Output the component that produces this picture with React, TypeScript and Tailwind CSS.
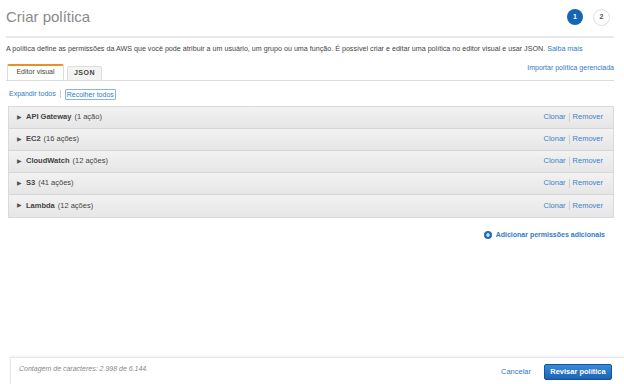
import React from 'react';

const services = [
  { name: 'API Gateway', count: '(1 ação)' },
  { name: 'EC2', count: '(16 ações)' },
  { name: 'CloudWatch', count: '(12 ações)' },
  { name: 'S3', count: '(41 ações)' },
  { name: 'Lambda', count: '(12 ações)' },
];

function ServiceRow({ name, count }: { name: string; count: string }) {
  return (
    <div className="flex h-[22px] items-center justify-between border-b border-[#d6d6d6] bg-gradient-to-b from-[#f2f2f2] to-[#e6e6e6] pl-[8px] pr-[10px] last:border-b-0">
      <div className="flex items-center text-[7.5px] text-[#444]">
        <span className="mr-[4px] text-[5.5px] text-[#555]">▶</span>
        <span className="font-bold">{name}</span>
        <span className="ml-[3px]">{count}</span>
      </div>
      <div className="flex items-center text-[7.5px] text-[#3b83c9]">
        <span>Clonar</span>
        <span className="mx-[3px] h-[9px] w-px bg-[#cfcfcf]" />
        <span>Remover</span>
      </div>
    </div>
  );
}

export default function App() {
  return (
    <div className="flex h-[384px] w-[624px] flex-col overflow-hidden bg-white font-['Liberation_Sans',Arial,sans-serif]">
      <div className="flex items-center justify-between pl-[6px] pr-[14px] pt-[8px]">
        <h1 className="text-[15px] leading-[18px] text-[#8a8a8a]">Criar política</h1>
        <div className="flex items-center gap-[10px]">
          <div className="flex h-[16px] w-[16px] items-center justify-center rounded-full bg-[#1565b7] text-[7px] font-bold text-white">1</div>
          <div className="flex h-[17px] w-[17px] items-center justify-center rounded-full border border-[#dedede] bg-white text-[7px] font-bold text-[#555]">2</div>
        </div>
      </div>

      <div className="ml-[6px] mr-[10px] mt-[10px] border-t-2 border-[#e8e8e8]" />

      <p className="mt-[7px] px-[6px] text-[7.15px] leading-[9px] text-[#444]">
        A política define as permissões da AWS que você pode atribuir a um usuário, um grupo ou uma função. É possível criar e editar uma política no editor visual e usar JSON. <span className="text-[#2f7cc6]">Saiba mais</span>
      </p>

      <div className="ml-[6px] mr-[10px] mt-[9px] flex items-end justify-between border-b border-[#dcdcdc]">
        <div className="flex items-end gap-[3px] pl-[1px]">
          <div className="flex h-[16px] w-[57px] items-center justify-center rounded-t-[2px] border-x border-t-2 border-[#e8912a] border-x-[#dcdcdc] bg-white text-[7px] text-[#444]">Editor visual</div>
          <div className="mb-[-1px] flex h-[15px] w-[35px] items-center justify-center rounded-t-[2px] border border-[#dcdcdc] bg-[#f4f4f4] text-[7px] font-bold tracking-[0.5px] text-[#444]">JSON</div>
        </div>
        <span className="mb-[6px] text-[7px] text-[#2f7cc6]">Importar política gerenciada</span>
      </div>

      <div className="mt-[8px] flex items-center pl-[9px] text-[7px] text-[#2f7cc6]">
        <span>Expandir todos</span>
        <span className="mx-[4px] h-[8px] w-px bg-[#cfcfcf]" />
        <span className="rounded-[1px] border border-[#8ab4e0] px-[1px] leading-[9px]">Recolher todos</span>
      </div>

      <div className="ml-[8px] mr-[10px] mt-[6px] border border-[#dadada]">
        {services.map((s) => (
          <ServiceRow key={s.name} name={s.name} count={s.count} />
        ))}
      </div>

      <div className="mt-[12px] flex items-center justify-end pr-[19px] text-[7px] font-bold text-[#2f7cc6]">
        <svg width="8" height="8" viewBox="0 0 16 16" className="mr-[4px]">
          <circle cx="8" cy="8" r="8" fill="#1f6fbd" />
          <path d="M8 4v8M4 8h8" stroke="#fff" strokeWidth="2.4" />
        </svg>
        <span>Adicionar permissões adicionais</span>
      </div>

      <div className="ml-[10px] mt-auto flex h-[27px] items-start justify-between border-l border-t border-[#e6e6e6] pl-[8px] pr-[12px] shadow-[0_-1px_2px_rgba(0,0,0,0.05)]">
        <span className="mt-[6px] text-[7px] italic text-[#888]">Contagem de caracteres: 2.998 de 6.144.</span>
        <div className="mt-[6px] flex items-center">
          <span className="mr-[13px] text-[7.5px] text-[#2f7cc6]">Cancelar</span>
          <div className="flex h-[16px] w-[68px] items-center justify-center rounded-[2px] border border-[#15549c] bg-gradient-to-b from-[#3a8ad8] to-[#1d63b5] text-[7.5px] font-bold text-white">Revisar política</div>
        </div>
      </div>
    </div>
  );
}
